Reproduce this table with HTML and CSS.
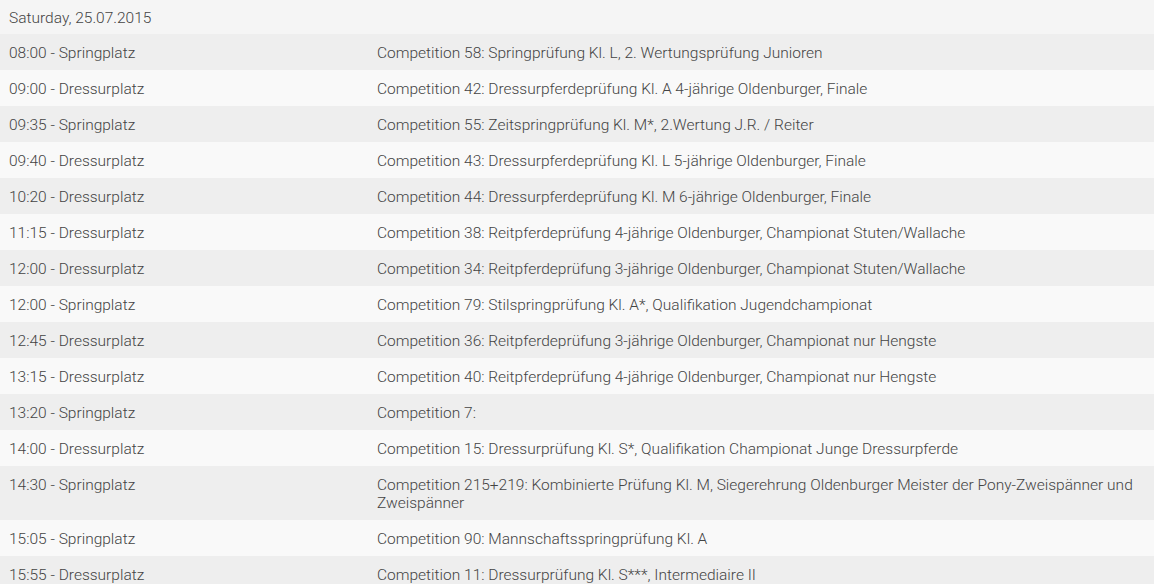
FILE: index.html
```html
<!DOCTYPE html>
<html>
<head>
<meta charset="utf-8">
<link rel="stylesheet" href="styles.css">
</head>
<body>
<table class="schedule">
<colgroup><col class="col-when"><col class="col-what"></colgroup>
<thead>
<tr class="day"><th colspan="2">Saturday, 25.07.2015</th></tr>
</thead>
<tbody>
<tr><td>08:00 - Springplatz</td><td>Competition 58: Springprüfung Kl. L, 2. Wertungsprüfung Junioren</td></tr>
<tr><td>09:00 - Dressurplatz</td><td>Competition 42: Dressurpferdeprüfung Kl. A 4-jährige Oldenburger, Finale</td></tr>
<tr><td>09:35 - Springplatz</td><td>Competition 55: Zeitspringprüfung Kl. M*, 2.Wertung J.R. / Reiter</td></tr>
<tr><td>09:40 - Dressurplatz</td><td>Competition 43: Dressurpferdeprüfung Kl. L 5-jährige Oldenburger, Finale</td></tr>
<tr><td>10:20 - Dressurplatz</td><td>Competition 44: Dressurpferdeprüfung Kl. M 6-jährige Oldenburger, Finale</td></tr>
<tr><td>11:15 - Dressurplatz</td><td>Competition 38: Reitpferdeprüfung 4-jährige Oldenburger, Championat Stuten/Wallache</td></tr>
<tr><td>12:00 - Dressurplatz</td><td>Competition 34: Reitpferdeprüfung 3-jährige Oldenburger, Championat Stuten/Wallache</td></tr>
<tr><td>12:00 - Springplatz</td><td>Competition 79: Stilspringprüfung Kl. A*, Qualifikation Jugendchampionat</td></tr>
<tr><td>12:45 - Dressurplatz</td><td>Competition 36: Reitpferdeprüfung 3-jährige Oldenburger, Championat nur Hengste</td></tr>
<tr><td>13:15 - Dressurplatz</td><td>Competition 40: Reitpferdeprüfung 4-jährige Oldenburger, Championat nur Hengste</td></tr>
<tr><td>13:20 - Springplatz</td><td>Competition 7:</td></tr>
<tr><td>14:00 - Dressurplatz</td><td>Competition 15: Dressurprüfung Kl. S*, Qualifikation Championat Junge Dressurpferde</td></tr>
<tr><td>14:30 - Springplatz</td><td>Competition 215+219: Kombinierte Prüfung Kl. M, Siegerehrung Oldenburger Meister der Pony-Zweispänner und Zweispänner</td></tr>
<tr><td>15:05 - Springplatz</td><td>Competition 90: Mannschaftsspringprüfung Kl. A</td></tr>
<tr><td>15:55 - Dressurplatz</td><td>Competition 11: Dressurprüfung Kl. S***, Intermediaire II</td></tr>
</tbody>
</table>
</body>
</html>
```
FILE: styles.css
```css
html, body {
  margin: 0;
  padding: 0;
  background: #f9f9f9;
}
body {
  font-family: "Roboto", "Liberation Sans", sans-serif;
  font-weight: 300;
  font-size: 15.5px;
  line-height: 18px;
  color: #444;
}
.schedule {
  width: 1154px;
  border-collapse: collapse;
  table-layout: fixed;
}
.col-when {
  width: 368px;
}
.schedule th {
  text-align: left;
  font-weight: 300;
  background: #f5f5f5;
  padding: 9px 9px 7px;
}
.schedule td {
  padding: 10px 9px 8px;
  vertical-align: top;
}
.schedule tbody tr:nth-child(odd) {
  background: #eeeeee;
}
.schedule tbody tr:nth-child(even) {
  background: #f9f9f9;
}
```
